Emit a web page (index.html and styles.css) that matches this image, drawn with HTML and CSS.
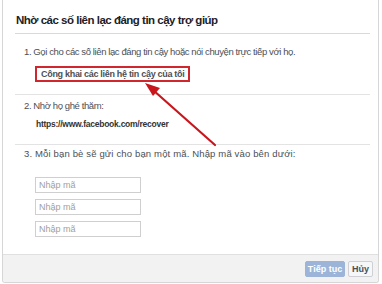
FILE: index.html
```html
<!DOCTYPE html>
<html lang="vi">
<head>
  <meta charset="UTF-8">
  <meta name="viewport" content="width=device-width, initial-scale=1.0">
  <title>Nhờ các số liên lạc đáng tin cậy trợ giúp</title>
  <link rel="stylesheet" href="styles.css">
</head>
<body>
  <!-- hộp thoại khôi phục tài khoản -->
  <div class="dialog">
    <div class="dialog-header">
      <h2 class="dialog-title">Nhờ các số liên lạc đáng tin cậy trợ giúp</h2>
    </div>

    <div class="step step-one">
      <p class="step-text">1. Gọi cho các số liên lạc đáng tin cậy hoặc nói chuyện trực tiếp với họ.</p>
      <div class="reveal-link">Công khai các liên hệ tin cậy của tôi</div>
    </div>

    <div class="step step-two">
      <p class="step-text">2. Nhờ họ ghé thăm:</p>
      <p class="recover-url">https://www.facebook.com/recover</p>
    </div>

    <div class="step step-three">
      <p class="step-text">3. Mỗi bạn bè sẽ gửi cho bạn một mã. Nhập mã vào bên dưới:</p>
      <div class="code-list">
        <input class="code-input" type="text" placeholder="Nhập mã">
        <input class="code-input" type="text" placeholder="Nhập mã">
        <input class="code-input" type="text" placeholder="Nhập mã">
      </div>
    </div>

    <div class="dialog-footer">
      <button class="btn btn-primary" type="button">Tiếp tục</button>
      <button class="btn btn-cancel" type="button">Hủy</button>
    </div>
  </div>

  <!-- mũi tên đỏ chú thích -->
  <svg class="callout-arrow" width="382" height="284" viewBox="0 0 382 284" xmlns="http://www.w3.org/2000/svg">
    <line x1="215" y1="145" x2="153" y2="90" stroke="#c8161d" stroke-width="2.2" stroke-linecap="round"/>
    <polygon points="145,83 160,88 153,96" fill="#c8161d"/>
  </svg>
</body>
</html>
```

FILE: styles.css
```css
body {
  margin: 0;
  background: #fff;
  font-family: "Liberation Sans", Arial, sans-serif;
  color: #4b4f56;
  position: relative;
}
p {
  margin: 0;
}
/* khung hộp thoại: viền xám nhạt, không có viền trên */
.dialog {
  margin-left: 2px;
  width: 375px;
  border: 1px solid #d6d6d6;
  border-top: 0;
  border-radius: 0 0 3px 3px;
}
.dialog-header {
  margin: 0 8px 0 12px;
  padding: 11px 0 4px 1px;
  border-bottom: 1px solid #d9d9d9;
}
.dialog-title {
  margin: 0;
  font-size: 11.5px;
  line-height: 18px;
  font-weight: bold;
  letter-spacing: -0.5px;
  color: #1d2129;
}
.step {
  margin: 0 8px 0 12px;
  padding-left: 9px;
}
.step-text {
  font-size: 9.5px;
  line-height: 14px;
  letter-spacing: -0.4px;
  color: #4b4f56;
}
.step-one {
  padding-top: 11px;
  padding-bottom: 12px;
  border-bottom: 1px solid #e3e3e3;
}
/* ô đỏ quanh liên kết */
.reveal-link {
  display: inline-block;
  margin: 7px 0 0 11px;
  padding: 0 4px;
  border: 2px solid #d0262d;
  font-size: 9px;
  line-height: 12px;
  font-weight: bold;
  letter-spacing: -0.3px;
  color: #4b4f56;
}
.step-two {
  padding-top: 4px;
  padding-bottom: 13px;
  border-bottom: 1px solid #e3e3e3;
}
.recover-url {
  margin: 4px 0 0 12px;
  font-size: 8.5px;
  line-height: 14px;
  font-weight: bold;
  letter-spacing: -0.25px;
  color: #333;
}
.step-three {
  padding-top: 2px;
  padding-bottom: 17px;
}
.step-three .step-text {
  letter-spacing: 0.15px;
}
.code-list {
  display: flex;
  flex-direction: column;
  gap: 6px;
  margin: 16px 0 0 11px;
}
.code-input {
  box-sizing: border-box;
  width: 106px;
  height: 16px;
  margin: 0;
  padding: 0 3px;
  border: 1px solid #cfcfcf;
  font-family: inherit;
  font-size: 9px;
  color: #555;
  outline: none;
}
.code-input::placeholder {
  color: #a0a0a0;
}
.dialog-footer {
  display: flex;
  justify-content: flex-end;
  gap: 3px;
  height: 28px;
  padding: 6px 5px 0 0;
  box-sizing: border-box;
  background: #f2f2f2;
  border-top: 1px solid #e0e0e0;
  border-radius: 0 0 3px 3px;
}
.btn {
  height: 16px;
  padding: 0;
  font-family: inherit;
  font-size: 9px;
  font-weight: bold;
  line-height: 14px;
  white-space: nowrap;
  border-radius: 2px;
}
.btn-primary {
  width: 40px;
  background: #9cb4d8;
  border: 1px solid #9cb4d8;
  color: #fff;
}
.btn-cancel {
  width: 25px;
  background: #f6f7f9;
  border: 1px solid #ced0d4;
  color: #4b4f56;
}
/* mũi tên nằm đè lên nội dung */
.callout-arrow {
  position: absolute;
  left: 0;
  top: 0;
  pointer-events: none;
}
```
